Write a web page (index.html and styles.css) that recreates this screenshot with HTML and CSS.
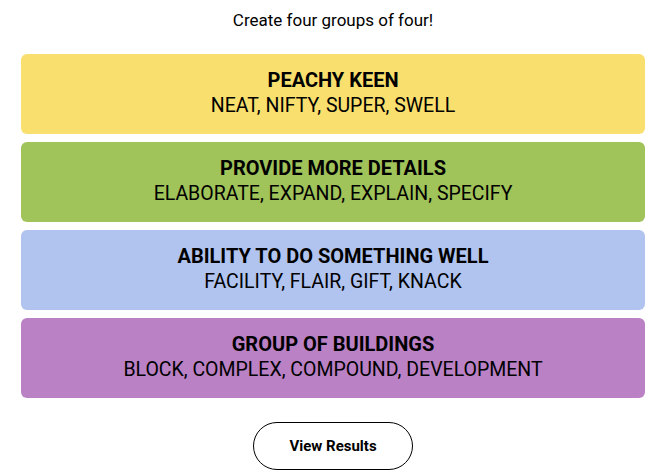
FILE: index.html
```html
<!DOCTYPE html>
<html>
<head>
<meta charset="utf-8">
<link rel="stylesheet" href="styles.css">
</head>
<body>
<main class="board">
  <p class="prompt">Create four groups of four!</p>
  <section class="groups">
    <div class="group yellow">
      <h3 class="title">PEACHY KEEN</h3>
      <p class="words">NEAT, NIFTY, SUPER, SWELL</p>
    </div>
    <div class="group green">
      <h3 class="title">PROVIDE MORE DETAILS</h3>
      <p class="words">ELABORATE, EXPAND, EXPLAIN, SPECIFY</p>
    </div>
    <div class="group blue">
      <h3 class="title">ABILITY TO DO SOMETHING WELL</h3>
      <p class="words">FACILITY, FLAIR, GIFT, KNACK</p>
    </div>
    <div class="group purple">
      <h3 class="title">GROUP OF BUILDINGS</h3>
      <p class="words">BLOCK, COMPLEX, COMPOUND, DEVELOPMENT</p>
    </div>
  </section>
  <div class="actions">
    <button class="results">View Results</button>
  </div>
</main>
</body>
</html>
```

FILE: styles.css
```css
* { box-sizing: border-box; }
body {
  margin: 0;
  background: #ffffff;
  font-family: Roboto, "Liberation Sans", sans-serif;
  color: #000;
}
.board {
  width: 624px;
  margin-left: 21px;
  display: flex;
  flex-direction: column;
}
.prompt {
  margin: 0;
  padding-top: 10px;
  height: 54px;
  text-align: center;
  font-size: 17px;
  line-height: 20px;
}
.groups {
  display: flex;
  flex-direction: column;
  gap: 8px;
}
.group {
  height: 80px;
  border-radius: 6px;
  padding-bottom: 2px;
  display: flex;
  flex-direction: column;
  align-items: center;
  justify-content: center;
  text-align: center;
}
.yellow { background: #f9df6d; }
.green { background: #a0c35a; }
.blue { background: #b0c4ef; }
.purple { background: #ba81c5; }
.title {
  margin: 0;
  font-size: 20px;
  font-weight: 700;
  line-height: 25px;
}
.words {
  margin: 0;
  font-size: 19.5px;
  font-weight: 400;
  line-height: 25px;
}
.actions {
  display: flex;
  justify-content: center;
  padding-top: 24px;
}
.results {
  width: 160px;
  height: 48px;
  border: 1px solid #000;
  border-radius: 24px;
  background: #fff;
  font-family: Roboto, "Liberation Sans", sans-serif;
  font-weight: 700;
  font-size: 15px;
  color: #000;
}
```
